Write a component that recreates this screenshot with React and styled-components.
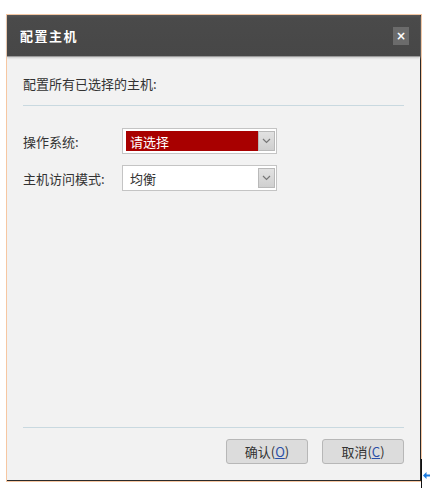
import React from 'react';
import styled, { createGlobalStyle } from 'styled-components';

const GlobalStyle = createGlobalStyle`
  html, body {
    margin: 0;
    padding: 0;
    background: #fff;
    font-family: "Noto Sans CJK SC", "Liberation Sans", sans-serif;
  }
`;

const Page = styled.div`
  position: relative;
  width: 430px;
  height: 488px;
  padding: 14px 0 0 6px;
  box-sizing: border-box;
`;

const Frame = styled.div`
  width: 416px;
  height: 468px;
  border: 1px solid #f6c7a2;
  box-sizing: border-box;
`;

const Dialog = styled.div`
  display: flex;
  flex-direction: column;
  height: 100%;
  background: #f2f2f2;
  border-right: 1px solid #2a2a2a;
  border-bottom: 1px solid #2a2a2a;
  box-sizing: border-box;
`;

const TitleBar = styled.div`
  display: flex;
  align-items: center;
  justify-content: space-between;
  height: 42px;
  padding: 0 11px 0 13px;
  background: linear-gradient(#555555 0px, #4a4a4a 3px, #474747 100%);
  border-bottom: 1px solid #9a9a9a;
  box-shadow: 0 1px 2px #c8c8c8;
  box-sizing: border-box;
`;

const Title = styled.span`
  color: #ffffff;
  font-size: 13px;
  font-weight: bold;
  letter-spacing: 1.5px;
`;

const CloseButton = styled.div`
  width: 16px;
  height: 18px;
  background: #6b6b6b;
  color: #ffffff;
  display: flex;
  align-items: center;
  justify-content: center;
  font-family: "DejaVu Sans", sans-serif;
  font-size: 12px;
  font-weight: bold;
  line-height: 1;
`;

const Body = styled.div`
  flex: 1;
  display: flex;
  flex-direction: column;
  padding: 0 16px 0 16px;
`;

const Intro = styled.div`
  font-size: 13px;
  line-height: 18px;
  color: #333333;
  padding: 18px 0 12px;
  border-bottom: 1px solid #c9d9e0;
`;

const Form = styled.div`
  flex: 1;
  display: flex;
  flex-direction: column;
  gap: 11px;
  padding-top: 22px;
`;

const Row = styled.div`
  display: flex;
  align-items: center;
`;

const Label = styled.label`
  width: 99px;
  font-size: 13px;
  color: #333333;
`;

const Select = styled.div`
  width: 155px;
  height: 26px;
  border: 1px solid #c4c4c4;
  background: #ffffff;
  padding: 2px 1px 2px 3px;
  box-sizing: border-box;
  display: flex;
`;

const Value = styled.div`
  flex: 1;
  display: flex;
  align-items: center;
  padding-left: 4px;
  font-size: 13px;
  color: ${p => (p.$alert ? '#ffffff' : '#333333')};
  background: ${p => (p.$alert ? '#a80000' : '#ffffff')};
`;

const Arrow = styled.div`
  width: 17px;
  background: linear-gradient(#e2e2e2, #cfcfcf);
  border: 1px solid #b9b9b9;
  box-sizing: border-box;
  display: flex;
  align-items: center;
  justify-content: center;
`;

const Footer = styled.div`
  display: flex;
  justify-content: flex-end;
  gap: 14px;
  border-top: 1px solid #c9d9e0;
  padding: 11px 0 16px;
`;

const Button = styled.button`
  width: 82px;
  height: 25px;
  border: 1px solid #b7b7b7;
  border-radius: 3px;
  background: #dcdcdc;
  font-family: "Noto Sans CJK SC", "Liberation Sans", sans-serif;
  font-size: 13px;
  color: #333333;
  padding: 0;
  u {
    color: #2a4fa8;
  }
`;

const Cursor = styled.div`
  position: absolute;
  left: 421px;
  top: 459px;
  width: 1px;
  height: 29px;
  background: #111;
`;

const CursorArrow = styled.svg`
  position: absolute;
  left: 423px;
  top: 472px;
`;

const Chevron = () => (
  <svg width="9" height="6" viewBox="0 0 9 6">
    <path d="M1 1 L4.5 4.5 L8 1" fill="none" stroke="#777" strokeWidth="1.2" />
  </svg>
);

const Dropdown = ({ value, alert }) => (
  <Select>
    <Value $alert={alert}>{value}</Value>
    <Arrow><Chevron /></Arrow>
  </Select>
);

export default function App() {
  return (
    <Page>
      <GlobalStyle />
      <Frame>
        <Dialog>
          <TitleBar>
            <Title>配置主机</Title>
            <CloseButton>×</CloseButton>
          </TitleBar>
          <Body>
            <Intro>配置所有已选择的主机:</Intro>
            <Form>
              <Row>
                <Label>操作系统:</Label>
                <Dropdown value="请选择" alert />
              </Row>
              <Row>
                <Label>主机访问模式:</Label>
                <Dropdown value="均衡" />
              </Row>
            </Form>
            <Footer>
              <Button>确认(<u>O</u>)</Button>
              <Button>取消(<u>C</u>)</Button>
            </Footer>
          </Body>
        </Dialog>
      </Frame>
      <Cursor />
      <CursorArrow width="7" height="7" viewBox="0 0 7 7">
        <path d="M0 3.5 L3.5 0 L3.5 2.5 L7 2.5 L7 4.5 L3.5 4.5 L3.5 7 Z" fill="#1a7be0" />
      </CursorArrow>
    </Page>
  );
}
